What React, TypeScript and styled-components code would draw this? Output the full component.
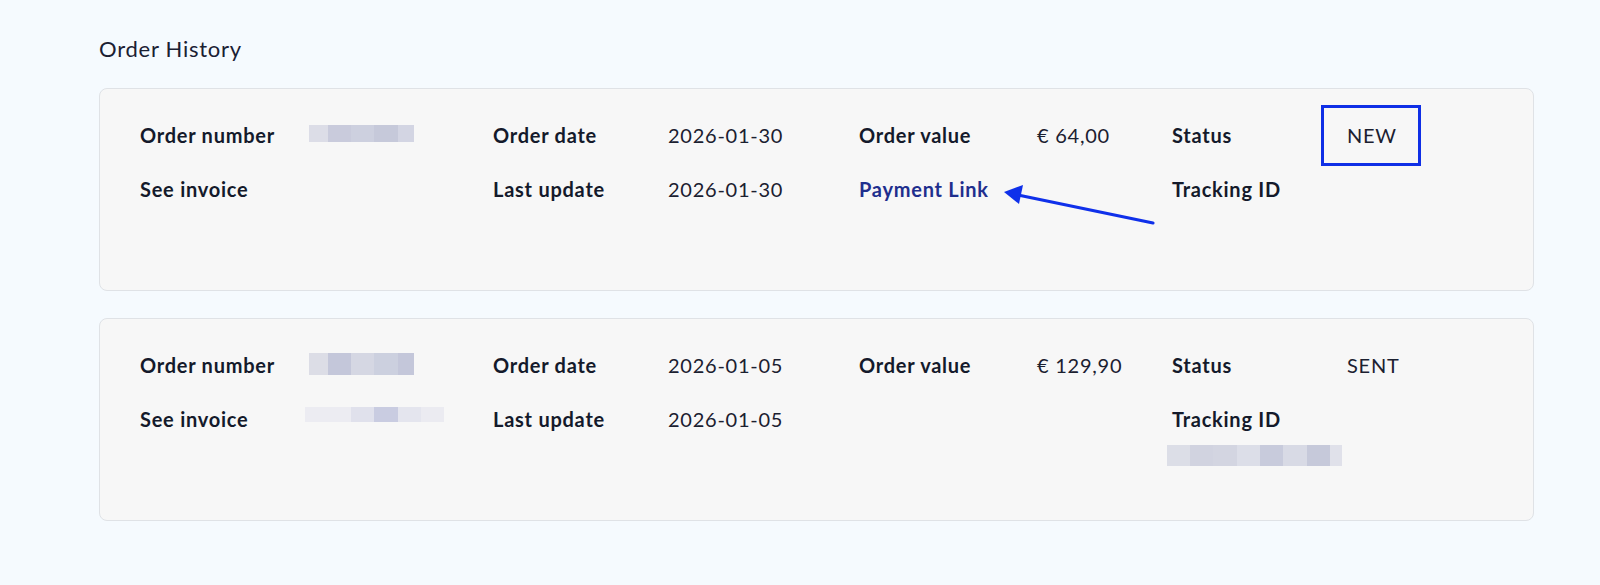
import { FC } from 'react';
import styled, { createGlobalStyle } from 'styled-components';

const GlobalStyle = createGlobalStyle`
  body {
    margin: 0;
    background: #f5fafe;
    font-family: Lato, "Noto Sans", sans-serif;
    color: #161b2c;
  }
`;

type Block = { w: number; c: string };
type Smudge = { mt: number; ml?: number; h: number; blocks: Block[] };

type Order = {
  id: string;
  number: Smudge;
  invoice?: Smudge;
  date: string;
  updated: string;
  value: string;
  status: string;
  highlight?: boolean;
  paymentLink?: boolean;
  tracking?: Smudge;
};

const Page = styled.main`
  padding: 34px 66px 40px 98px;
`;

const Title = styled.h2`
  margin: 0 0 24px 1px;
  font-size: 22px;
  font-weight: 400;
  line-height: 30px;
  letter-spacing: 0.75px;
  color: #1a2033;
`;

const List = styled.div`
  display: flex;
  flex-direction: column;
  gap: 27px;
`;

const Card = styled.section`
  position: relative;
  box-sizing: border-box;
  min-height: 203px;
  margin-left: 1px;
  padding: 32px 40px;
  background: #f7f7f7;
  border: 1px solid #dfe2e6;
  border-radius: 8px;
`;

const Grid = styled.div`
  display: grid;
  grid-template-columns: 169px 184px 175px 191px 178px 135px 175px 1fr;
  grid-auto-rows: minmax(28px, auto);
  row-gap: 26px;
  font-size: 20px;
  line-height: 28px;
  letter-spacing: 0.75px;
`;

const Label = styled.div`
  font-weight: 700;
  color: #141a2b;
`;

const Value = styled.div`
  font-weight: 400;
  color: #1b2030;
`;

const LinkText = styled.a`
  font-weight: 700;
  color: #1f2f8e;
  text-decoration: none;
`;

const StatusText = styled.span<{ $marked?: boolean }>`
  position: relative;
  display: inline-block;

  &::after {
    content: '';
    display: ${(p) => (p.$marked ? 'block' : 'none')};
    position: absolute;
    left: -26px;
    right: -24px;
    top: -16px;
    bottom: -17px;
    border: 3px solid #0f2fe6;
  }
`;

const Redacted = styled.div<{ $mt: number; $ml: number; $h: number }>`
  display: flex;
  margin-top: ${(p) => p.$mt}px;
  margin-left: ${(p) => p.$ml}px;
  height: ${(p) => p.$h}px;
`;

const Pixel = styled.span<{ $w: number; $c: string }>`
  width: ${(p) => p.$w}px;
  background: ${(p) => p.$c};
`;

const Arrow = styled.svg`
  position: absolute;
  left: 896px;
  top: 92px;
  overflow: visible;
`;

const Blur: FC<{ data: Smudge }> = ({ data }) => (
  <Redacted $mt={data.mt} $ml={data.ml ?? 0} $h={data.h}>
    {data.blocks.map((b, i) => (
      <Pixel key={i} $w={b.w} $c={b.c} />
    ))}
  </Redacted>
);

const orders: Order[] = [
  {
    id: 'a',
    number: {
      mt: 4,
      h: 17,
      blocks: [
        { w: 19, c: '#dcdde7' },
        { w: 23, c: '#c9cbdc' },
        { w: 23, c: '#cdd0df' },
        { w: 24, c: '#c6c9da' },
        { w: 16, c: '#d3d5e3' },
      ],
    },
    date: '2026-01-30',
    updated: '2026-01-30',
    value: '€ 64,00',
    status: 'NEW',
    highlight: true,
    paymentLink: true,
  },
  {
    id: 'b',
    number: {
      mt: 2,
      h: 22,
      blocks: [
        { w: 19, c: '#dcdde6' },
        { w: 23, c: '#c4c7da' },
        { w: 23, c: '#d5d7e3' },
        { w: 24, c: '#ccd0df' },
        { w: 16, c: '#c4c7da' },
      ],
    },
    invoice: {
      mt: 2,
      ml: -4,
      h: 15,
      blocks: [
        { w: 46, c: '#ececf2' },
        { w: 23, c: '#e0e1ec' },
        { w: 24, c: '#c9cce1' },
        { w: 23, c: '#e4e5ee' },
        { w: 23, c: '#ebebf1' },
      ],
    },
    date: '2026-01-05',
    updated: '2026-01-05',
    value: '€ 129,90',
    status: 'SENT',
    tracking: {
      mt: 12,
      ml: -5,
      h: 21,
      blocks: [
        { w: 23, c: '#dcdee7' },
        { w: 23, c: '#d1d3e0' },
        { w: 24, c: '#d3d5e1' },
        { w: 23, c: '#dcdee8' },
        { w: 23, c: '#c8cbdc' },
        { w: 24, c: '#d8dae5' },
        { w: 23, c: '#c6c9da' },
        { w: 12, c: '#e0e1ea' },
      ],
    },
  },
];

const OrderCard: FC<{ order: Order }> = ({ order }) => (
  <Card>
    <Grid>
      <Label>Order number</Label>
      <Value>
        <Blur data={order.number} />
      </Value>
      <Label>Order date</Label>
      <Value>{order.date}</Value>
      <Label>Order value</Label>
      <Value>{order.value}</Value>
      <Label>Status</Label>
      <Value>
        <StatusText $marked={order.highlight}>{order.status}</StatusText>
      </Value>

      <Label>See invoice</Label>
      <Value>{order.invoice && <Blur data={order.invoice} />}</Value>
      <Label>Last update</Label>
      <Value>{order.updated}</Value>
      <Value>{order.paymentLink && <LinkText href="#">Payment Link</LinkText>}</Value>
      <Value />
      <div>
        <Label>Tracking ID</Label>
        {order.tracking && <Blur data={order.tracking} />}
      </div>
      <Value />
    </Grid>

    {order.paymentLink && (
      // annotation arrow pointing at the payment link
      <Arrow width="165" height="50" viewBox="0 0 165 50">
        <line x1="157" y1="42" x2="22" y2="14" stroke="#0f30ea" strokeWidth="3.2" strokeLinecap="round" />
        <polygon points="8,11 27,4 23,23" fill="#0f30ea" />
      </Arrow>
    )}
  </Card>
);

const App: FC = () => (
  <>
    <GlobalStyle />
    <Page>
      <Title>Order History</Title>
      <List>
        {orders.map((o) => (
          <OrderCard key={o.id} order={o} />
        ))}
      </List>
    </Page>
  </>
);

export default App;
